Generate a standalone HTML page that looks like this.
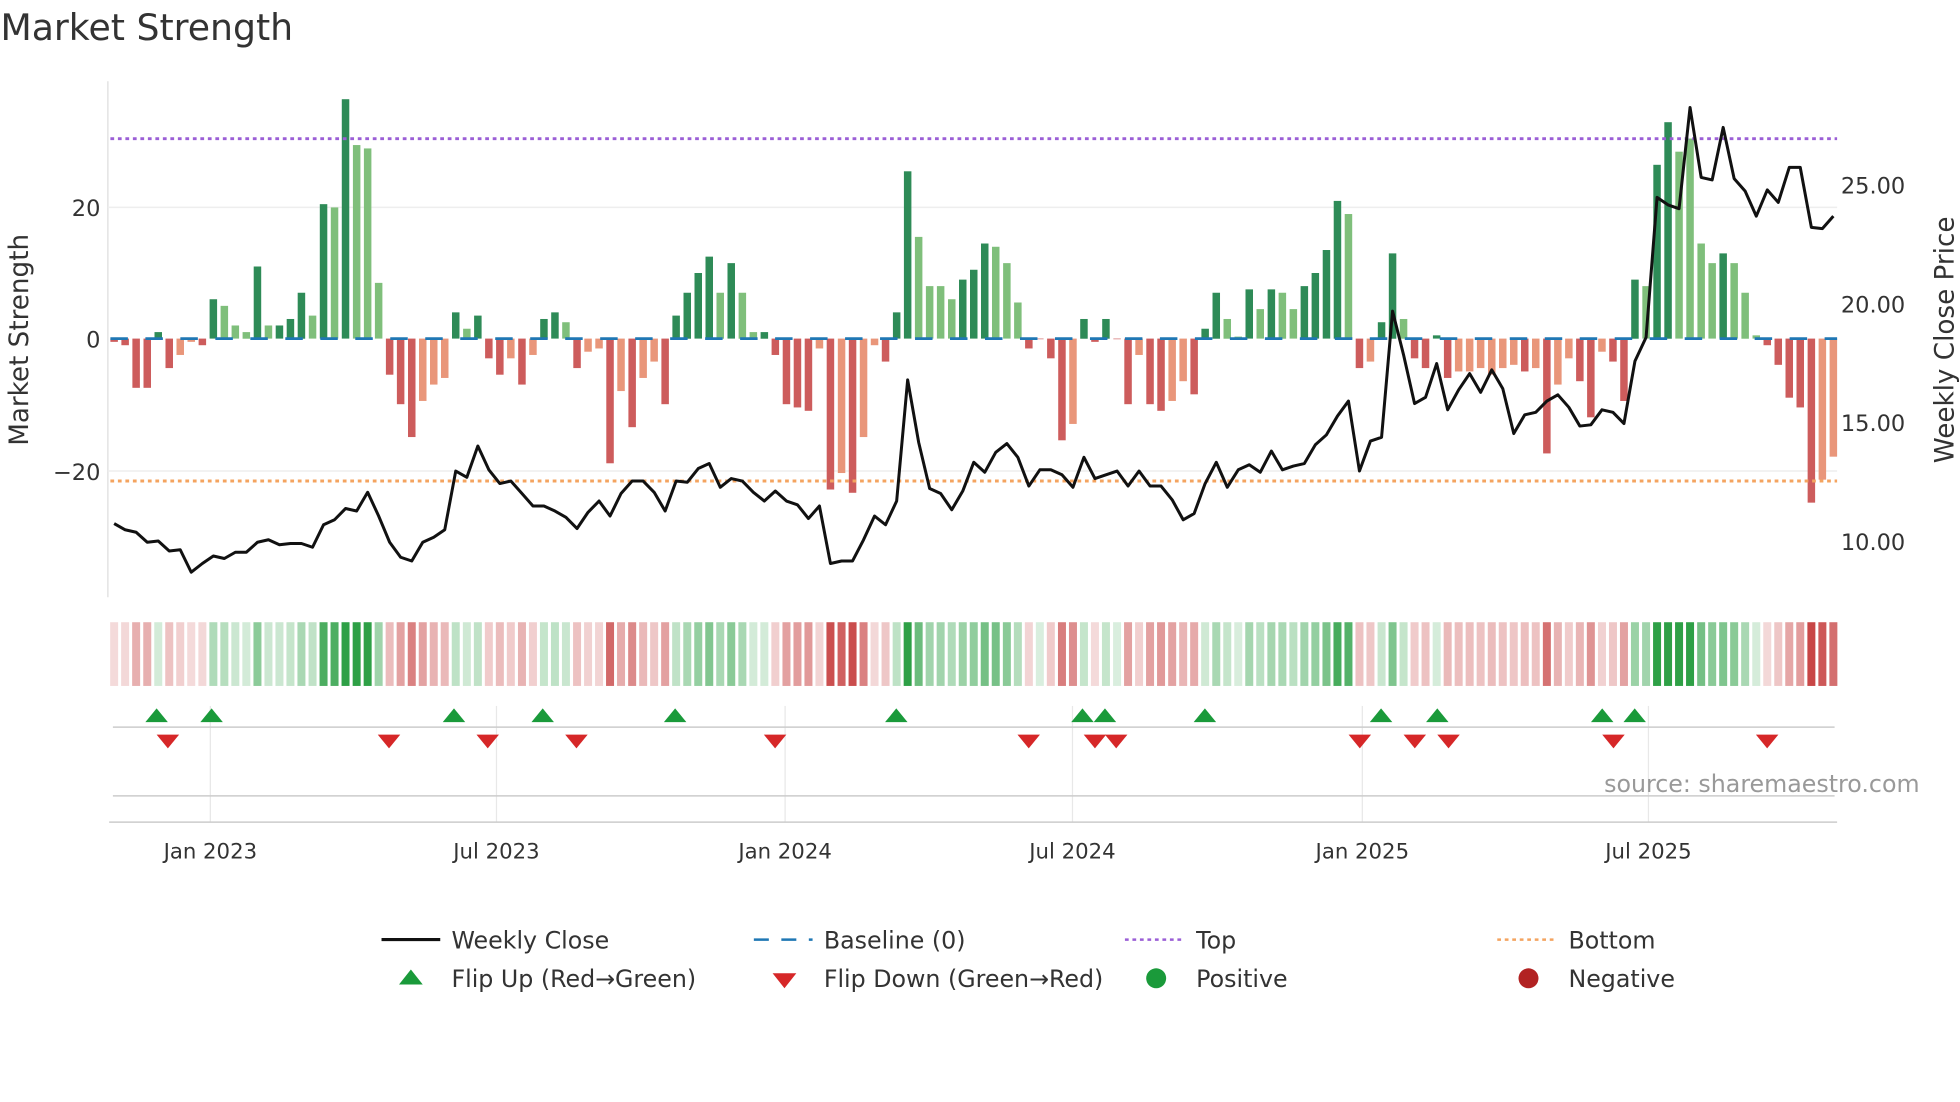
<!DOCTYPE html>
<html><head><meta charset="utf-8"><style>
html,body{margin:0;padding:0;background:#fff;}
svg{display:block;}
text{font-family:"DejaVu Sans","Liberation Sans",sans-serif;}
</style></head><body>
<svg id="s" width="1960" height="1102" viewBox="0 0 1568 882" xmlns="http://www.w3.org/2000/svg">
<rect width="1568" height="882" fill="#fff"/>
<text x="0" y="32" font-size="29" fill="#333">Market Strength</text>
<text transform="translate(22,272) rotate(-90)" text-anchor="middle" font-size="21" fill="#333">Market Strength</text>
<text transform="translate(1563,272) rotate(-90)" text-anchor="middle" font-size="21" fill="#333">Weekly Close Price</text>
<line x1="86" y1="65" x2="86" y2="478" stroke="#ddd" stroke-width="1"/>
<g stroke="#eee" stroke-width="1.2">
<line x1="86" y1="166" x2="1470" y2="166"/><line x1="86" y1="377" x2="1470" y2="377"/>
</g>
<g font-size="18" fill="#333" text-anchor="end">
<text x="80" y="173">20</text><text x="80" y="278">0</text><text x="80" y="384">−20</text>
</g>
<g font-size="18" fill="#333">
<text x="1473" y="155">25.00</text><text x="1473" y="250">20.00</text><text x="1473" y="345">15.00</text><text x="1473" y="440">10.00</text>
</g>
<g id="bars"></g>
<line x1="88" y1="111" x2="1470" y2="111" stroke="#9b5fd6" stroke-width="2.4" stroke-dasharray="3 3"/>
<line x1="88" y1="385" x2="1470" y2="385" stroke="#f4a460" stroke-width="2.4" stroke-dasharray="3 3"/>
<line x1="88" y1="271" x2="1470" y2="271" stroke="#1f77b4" stroke-width="2.2" stroke-dasharray="14 14"/>
<polyline id="price" fill="none" stroke="#111" stroke-width="2.4" stroke-linejoin="round"/>
<g id="heat"></g>
<g stroke="#e8e8e8" stroke-width="1">
<line x1="168" y1="565" x2="168" y2="658"/><line x1="397" y1="565" x2="397" y2="658"/><line x1="628" y1="565" x2="628" y2="658"/><line x1="858" y1="565" x2="858" y2="658"/><line x1="1090" y1="565" x2="1090" y2="658"/><line x1="1319" y1="565" x2="1319" y2="658"/>
</g>
<line x1="90" y1="582" x2="1468" y2="582" stroke="#ccc" stroke-width="1.2"/>
<line x1="90" y1="637" x2="1468" y2="637" stroke="#ccc" stroke-width="1.2"/>
<line x1="87" y1="658" x2="1470" y2="658" stroke="#ccc" stroke-width="1.2"/>
<g id="marks"></g>
<text x="1536" y="634" font-size="19" fill="#999" text-anchor="end">source: sharemaestro.com</text>
<g font-size="17" fill="#333" text-anchor="middle">
<text x="168" y="687">Jan 2023</text><text x="397" y="687">Jul 2023</text><text x="628" y="687">Jan 2024</text><text x="858" y="687">Jul 2024</text><text x="1090" y="687">Jan 2025</text><text x="1319" y="687">Jul 2025</text>
</g>
<g font-size="19" fill="#333">
<line x1="305" y1="752" x2="352" y2="752" stroke="#111" stroke-width="2.5"/><text x="361" y="759">Weekly Close</text>
<line x1="603" y1="752" x2="650" y2="752" stroke="#1f77b4" stroke-width="2" stroke-dasharray="12 10"/><text x="659" y="759">Baseline (0)</text>
<line x1="900" y1="752" x2="947" y2="752" stroke="#9b5fd6" stroke-width="2" stroke-dasharray="3 3"/><text x="957" y="759">Top</text>
<line x1="1198" y1="752" x2="1245" y2="752" stroke="#f4a460" stroke-width="2" stroke-dasharray="3 3"/><text x="1255" y="759">Bottom</text>
<polygon points="319,788 338,788 328.5,776" fill="#1a9a3a"/><text x="361" y="790">Flip Up (Red→Green)</text>
<polygon points="618,779 637,779 627.5,791" fill="#d62728"/><text x="659" y="790">Flip Down (Green→Red)</text>
<circle cx="925" cy="783" r="8" fill="#1a9a3a"/><text x="957" y="790">Positive</text>
<circle cx="1223" cy="783" r="8" fill="#b22222"/><text x="1255" y="790">Negative</text>
</g>
</svg>
<script>
var v=[[-0.5,'r'],[-1,'r'],[-7.5,'r'],[-7.5,'r'],[1,'d'],[-4.5,'r'],[-2.5,'o'],[-0.5,'o'],[-1,'r'],[6,'d'],[5,'l'],[2,'l'],[1,'l'],[11,'d'],[2,'l'],[2,'d'],[3,'d'],[7,'d'],[3.5,'l'],[20.5,'d'],[20,'l'],[36.5,'d'],[29.5,'l'],[29,'l'],[8.5,'l'],[-5.5,'r'],[-10,'r'],[-15,'r'],[-9.5,'o'],[-7,'o'],[-6,'o'],[4,'d'],[1.5,'l'],[3.5,'d'],[-3,'r'],[-5.5,'r'],[-3,'o'],[-7,'r'],[-2.5,'o'],[3,'d'],[4,'d'],[2.5,'l'],[-4.5,'r'],[-2,'o'],[-1.5,'o'],[-19,'r'],[-8,'o'],[-13.5,'r'],[-6,'o'],[-3.5,'o'],[-10,'r'],[3.5,'d'],[7,'d'],[10,'d'],[12.5,'d'],[7,'l'],[11.5,'d'],[7,'l'],[1,'l'],[1,'d'],[-2.5,'r'],[-10,'r'],[-10.5,'r'],[-11,'r'],[-1.5,'o'],[-23,'r'],[-20.5,'o'],[-23.5,'r'],[-15,'o'],[-1,'o'],[-3.5,'r'],[4,'d'],[25.5,'d'],[15.5,'l'],[8,'l'],[8,'l'],[6,'l'],[9,'d'],[10.5,'d'],[14.5,'d'],[14,'l'],[11.5,'l'],[5.5,'l'],[-1.5,'r'],[0,'r'],[-3,'r'],[-15.5,'r'],[-13,'o'],[3,'d'],[-0.5,'r'],[3,'d'],[0,'r'],[-10,'r'],[-2.5,'o'],[-10,'r'],[-11,'r'],[-9.5,'o'],[-6.5,'o'],[-8.5,'r'],[1.5,'d'],[7,'d'],[3,'l'],[0.3,'l'],[7.5,'d'],[4.5,'l'],[7.5,'d'],[7,'l'],[4.5,'l'],[8,'d'],[10,'d'],[13.5,'d'],[21,'d'],[19,'l'],[-4.5,'r'],[-3.5,'o'],[2.5,'d'],[13,'d'],[3,'l'],[-3,'r'],[-4.5,'r'],[0.5,'d'],[-6,'r'],[-5,'o'],[-5,'o'],[-4.5,'o'],[-5.5,'o'],[-4.5,'o'],[-4,'o'],[-5,'r'],[-4.5,'o'],[-17.5,'r'],[-7,'o'],[-3,'o'],[-6.5,'r'],[-12,'r'],[-2,'o'],[-3.5,'r'],[-9.5,'r'],[9,'d'],[8,'l'],[26.5,'d'],[33,'d'],[28.5,'l'],[30.5,'l'],[14.5,'l'],[11.5,'l'],[13,'d'],[11.5,'l'],[7,'l'],[0.5,'l'],[-1,'r'],[-4,'r'],[-9,'r'],[-10.5,'r'],[-25,'r'],[-21.5,'o'],[-18,'o']];
var py=[419,424,426,434,433,441,440,458,451,445,447,442,442,434,432,436,435,435,438,420,416,407,409,394,413,434,446,449,434,430,424,377,382,357,376,387,385,395,405,405,409,414,423,410,401,413,395,385,385,394,409,385,386,375,371,390,383,385,394,401,393,401,404,415,405,451,449,449,432,413,420,401,304,354,391,395,408,393,370,378,362,355,366,389,376,376,380,390,366,383,380,377,389,377,389,389,400,416,411,387,370,390,376,372,378,361,376,373,371,356,348,333,321,377,353,350,249,284,323,318,291,328,312,299,314,296,311,347,332,330,321,316,326,341,340,328,330,339,289,270,158,164,167,86,142,144,102,143,153,173,152,162,134,134,182,183,173];
var col={d:'#2e8b57',l:'#7fbf7b',r:'#cd5c5c',o:'#e9967a'};
var b='',h='',pts=[],n=v.length,dx=(1467-91)/(n-1);
for(var i=0;i<n;i++){var x=91+dx*i,val=v[i][0],hh=Math.abs(val)*5.25;
var y=val>=0?271-hh:271;b+='<rect x="'+(x-3).toFixed(1)+'" y="'+y.toFixed(1)+'" width="6" height="'+Math.max(hh,0.5).toFixed(1)+'" fill="'+col[v[i][1]]+'"/>';
var a=Math.min(1,0.18+Math.abs(val)/30);var c=val>=0?'rgba(46,160,70,'+a.toFixed(2)+')':'rgba(200,70,70,'+a.toFixed(2)+')';
h+='<rect x="'+(x-3.2).toFixed(1)+'" y="498" width="6.4" height="51" fill="'+c+'"/>';
pts.push(x.toFixed(1)+','+py[i]);}
document.getElementById('bars').innerHTML=b;document.getElementById('heat').innerHTML=h;
document.getElementById('price').setAttribute('points',pts.join(' '));
var up=[125,169,363,434,540,717,866,884,964,1105,1150,1282,1308],dn=[134,311,390,461,620,823,876,893,1088,1132,1159,1291,1414],m='';
up.forEach(function(x){m+='<polygon points="'+(x-9)+',578 '+(x+9)+',578 '+x+',567" fill="#1a9a3a"/>';});
dn.forEach(function(x){m+='<polygon points="'+(x-9)+',588 '+(x+9)+',588 '+x+',599" fill="#d62728"/>';});
document.getElementById('marks').innerHTML=m;
</script>
</body></html>
